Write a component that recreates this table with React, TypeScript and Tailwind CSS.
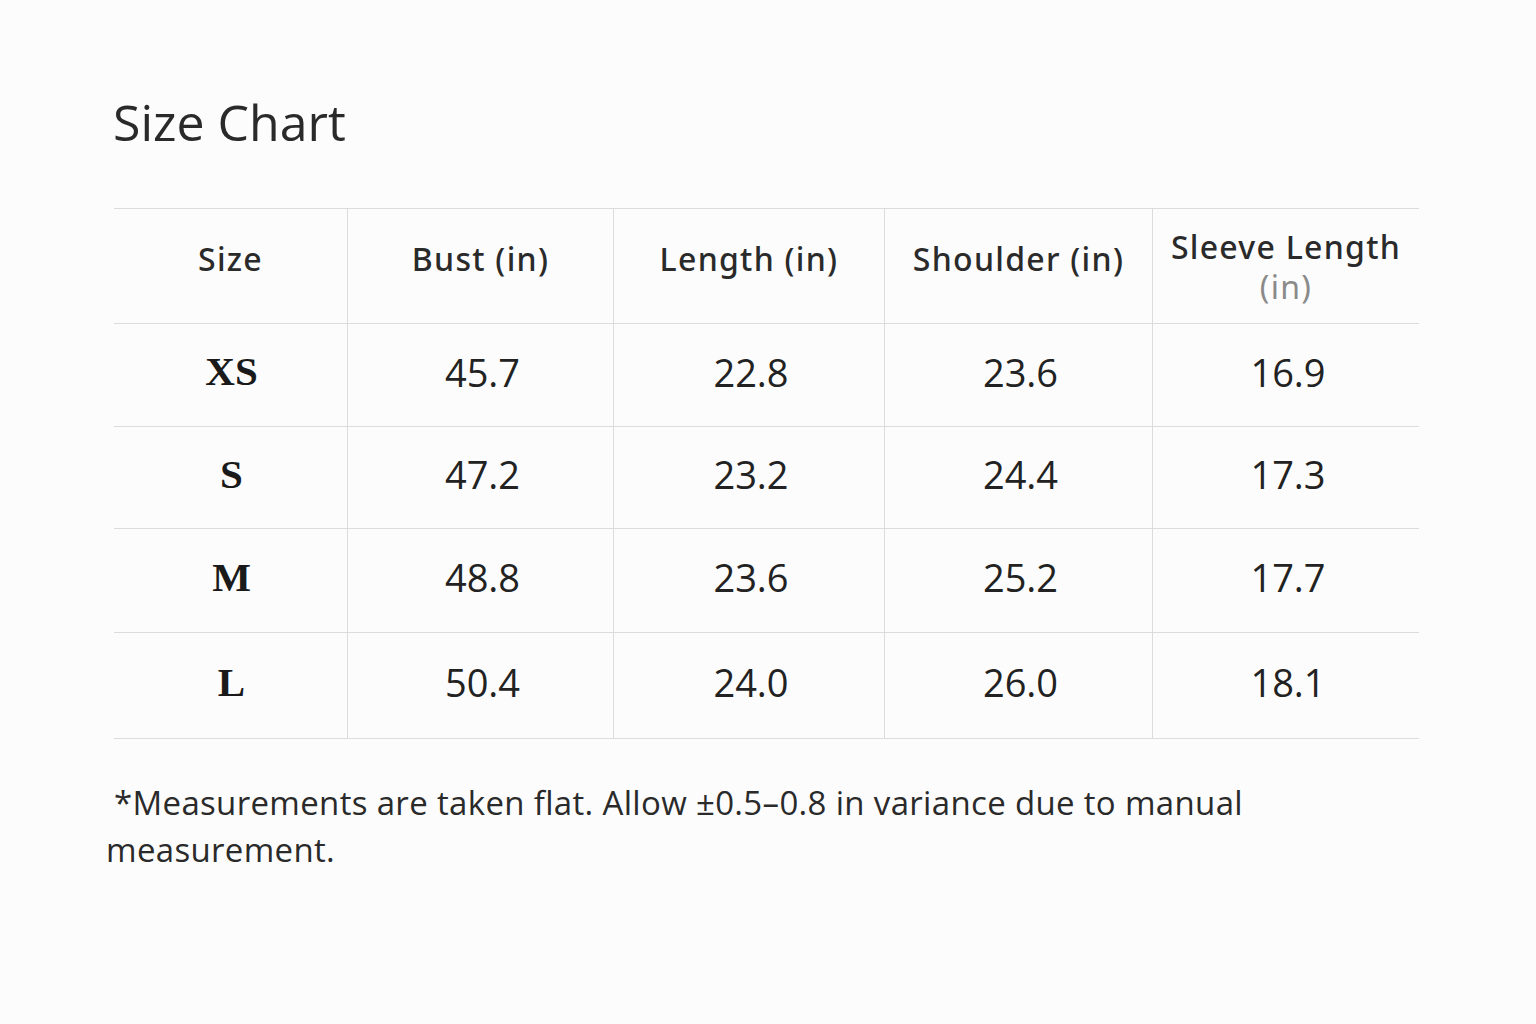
const headers = ['Size', 'Bust (in)', 'Length (in)', 'Shoulder (in)'];

const rows = [
  { size: 'XS', values: ['45.7', '22.8', '23.6', '16.9'] },
  { size: 'S', values: ['47.2', '23.2', '24.4', '17.3'] },
  { size: 'M', values: ['48.8', '23.6', '25.2', '17.7'] },
  { size: 'L', values: ['50.4', '24.0', '26.0', '18.1'] },
];

const cols = 'grid grid-cols-[234px_266px_271px_268px_1fr]';
const heights = ['h-[103px]', 'h-[102px]', 'h-[104px]', 'h-[106px]'];

export default function App() {
  return (
    <div className="min-h-screen w-full bg-[#fcfcfc] font-['Open_Sans',sans-serif] text-[#222]">
      <div className="pl-[114px] pr-[117px] pt-[88px]">
        <h1 className="ml-[-1px] text-[50px] leading-[68px] text-[#2a2a2a]">Size Chart</h1>

        <div className="mt-[52px] border-t border-[#dcdcdc]">
          <div className={`${cols} h-[115px] border-b border-[#dcdcdc] font-['Noto_Sans',sans-serif] text-[32px] font-medium tracking-[0.04em] text-[#2a2a2a]`}>
            {headers.map((h) => (
              <div key={h} className="flex items-center justify-center border-r border-[#dcdcdc] pb-[14px]">
                {h}
              </div>
            ))}
            <div className="flex flex-col items-center justify-center pt-[2px] leading-[40px]">
              <span>Sleeve Length</span>
              <span className="font-normal text-[#8a8a8a]">(in)</span>
            </div>
          </div>

          {rows.map((r, i) => (
            <div key={r.size} className={`${cols} ${heights[i]} border-b border-[#dcdcdc]`}>
              <div className="flex items-center justify-center border-r border-[#dcdcdc] pb-[6px] pl-[2px] font-['Liberation_Serif',serif] text-[41px] font-bold text-[#1a1a1a]">
                {r.size}
              </div>
              {r.values.map((v, j) => (
                <div
                  key={j}
                  className={`flex items-center justify-center pb-[6px] pl-[4px] text-[38px] text-[#222] ${j < 3 ? 'border-r border-[#dcdcdc]' : ''}`}
                >
                  {v}
                </div>
              ))}
            </div>
          ))}
        </div>

        <p className="ml-[-8px] mt-[40px] max-w-[1220px] indent-[8px] text-[33px] leading-[47px] tracking-[0.01em] text-[#2a2a2a]">
          *Measurements are taken flat. Allow ±0.5–0.8 in variance due to manual measurement.
        </p>
      </div>
    </div>
  );
}
